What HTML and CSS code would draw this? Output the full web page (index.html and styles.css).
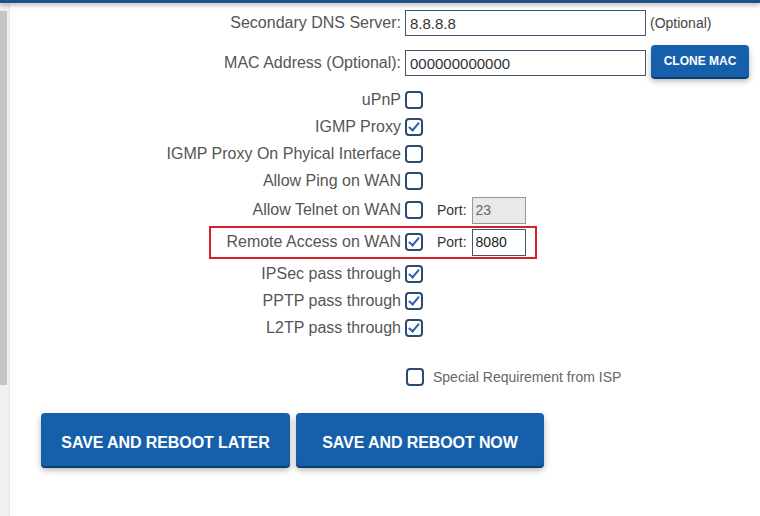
FILE: index.html
```html
<html charset="utf-8">
  <head>
    <title>WAN Settings</title>
    <link rel="stylesheet" href="styles.css">
  </head>
  <body>
    <div id="topbar"></div>
    <div id="page">
      <div id="sidebar"><div class="thumb"></div></div>
      <div id="main">
        <div class="row text-row">
          <label>Secondary DNS Server:</label>
          <div class="ctl">
            <input class="field" type="text" value="8.8.8.8">
            <span class="hint">(Optional)</span>
          </div>
        </div>
        <div class="row text-row mac-row">
          <label>MAC Address (Optional):</label>
          <div class="ctl">
            <input class="field" type="text" value="000000000000">
            <a class="btn btn-small" href="#">CLONE MAC</a>
          </div>
        </div>

        <div class="checks">
          <div class="row check-row">
            <label>uPnP</label>
            <div class="ctl"><span class="box"></span></div>
          </div>
          <div class="row check-row">
            <label>IGMP Proxy</label>
            <div class="ctl"><span class="box on"></span></div>
          </div>
          <div class="row check-row">
            <label>IGMP Proxy On Phyical Interface</label>
            <div class="ctl"><span class="box"></span></div>
          </div>
          <div class="row check-row">
            <label>Allow Ping on WAN</label>
            <div class="ctl"><span class="box"></span></div>
          </div>
          <div class="row check-row port-row">
            <label>Allow Telnet on WAN</label>
            <div class="ctl">
              <span class="box"></span>
              <span class="port-label">Port:</span>
              <input class="port" type="text" value="23" disabled>
            </div>
          </div>
          <div class="row check-row port-row marked">
            <label>Remote Access on WAN</label>
            <div class="ctl">
              <span class="box on"></span>
              <span class="port-label">Port:</span>
              <input class="port" type="text" value="8080">
            </div>
            <div class="highlight"></div>
          </div>
          <div class="row check-row after-ports">
            <label>IPSec pass through</label>
            <div class="ctl"><span class="box on"></span></div>
          </div>
          <div class="row check-row">
            <label>PPTP pass through</label>
            <div class="ctl"><span class="box on"></span></div>
          </div>
          <div class="row check-row">
            <label>L2TP pass through</label>
            <div class="ctl"><span class="box on"></span></div>
          </div>
          <div class="row check-row special">
            <label></label>
            <div class="ctl">
              <span class="box"></span>
              <span class="special-label">Special Requirement from ISP</span>
            </div>
          </div>
        </div>

        <div class="actions">
          <a class="btn btn-big btn-later" href="#">SAVE AND REBOOT LATER</a>
          <a class="btn btn-big btn-now" href="#">SAVE AND REBOOT NOW</a>
        </div>
      </div>
    </div>
  </body>
</html>
```

FILE: styles.css
```css
body {
  margin: 0;
  font-family: "Liberation Sans", Arial, sans-serif;
  background: #fff;
  overflow: hidden;
}

#topbar {
  height: 3px;
  background: #1f4f86;
  box-shadow: 0 2px 4px rgba(0, 0, 0, 0.35);
  position: relative;
  z-index: 2;
}

#page { display: flex; height: 513px; }

#sidebar {
  width: 9px;
  background: #f0f0f0;
  border-right: 1px solid #e4e4e4;
  padding-top: 8px;
}
#sidebar .thumb { width: 7px; height: 374px; background: #c4c4c4; }

#main { flex: 1; padding-top: 7px; }

.row {
  display: grid;
  grid-template-columns: 391px auto;
  column-gap: 4px;
  align-items: center;
  position: relative;
}
.row label {
  text-align: right;
  font-size: 16px;
  color: #555;
  white-space: nowrap;
}
.ctl { display: flex; align-items: center; }

.text-row { height: 26px; }
.mac-row { margin-top: 13px; }

.field {
  width: 241px;
  height: 26px;
  box-sizing: border-box;
  border: 1px solid #3e5670;
  padding: 0 4px;
  font-family: "Liberation Sans", Arial, sans-serif;
  font-size: 15px;
  color: #333;
  outline: none;
}
.hint { margin-left: 4px; font-size: 14px; color: #444; }

.btn {
  display: flex;
  align-items: center;
  justify-content: center;
  background: #1660ab;
  color: #fff;
  font-weight: bold;
  text-decoration: none;
  border-radius: 4px;
  box-shadow: 0 2px 0 #0d3d6e, 0 4px 6px rgba(0, 0, 0, 0.3);
}
.btn-small {
  margin-left: 5px;
  width: 98px;
  height: 32px;
  font-size: 12px;
  margin-top: -4px;
}

.checks { margin-top: 11px; }
.check-row { height: 27px; }
.port-row { height: 32px; }
.after-ports { margin-top: 2px; }
.special { margin-top: 22px; }

.box {
  width: 18px;
  height: 18px;
  box-sizing: border-box;
  border: 2px solid #2b4c6f;
  border-radius: 4px;
  position: relative;
  flex: none;
}
.special .box { margin-left: 1px; }
.box.on::after {
  content: "";
  position: absolute;
  left: 4px;
  top: 0px;
  width: 4px;
  height: 9px;
  border-right: 2px solid #2f62ad;
  border-bottom: 2px solid #2f62ad;
  transform: rotate(40deg);
}

.port-label { margin-left: 14px; font-size: 14px; color: #333; }
.port {
  margin-left: 5px;
  width: 54px;
  height: 27px;
  box-sizing: border-box;
  border: 1px solid #3e5670;
  padding: 0 3px;
  font-family: "Liberation Sans", Arial, sans-serif;
  font-size: 14px;
  color: #222;
  background: #fff;
  outline: none;
}
.port:disabled { background: #e9e9e9; border-color: #8a9aa8; color: #666; }

.special-label { margin-left: 9px; font-size: 14px; color: #666; }

.highlight {
  position: absolute;
  left: 199px;
  top: 0;
  width: 328px;
  height: 33px;
  box-sizing: border-box;
  border: 2px solid #d42128;
  pointer-events: none;
}

.actions {
  display: flex;
  gap: 6px;
  margin-top: 23px;
  padding-left: 31px;
}
.btn-big {
  height: 53px;
  box-sizing: border-box;
  padding-top: 7px;
  font-size: 16px;
  letter-spacing: -0.1px;
}
.btn-later { width: 249px; }
.btn-now { width: 248px; }
```
